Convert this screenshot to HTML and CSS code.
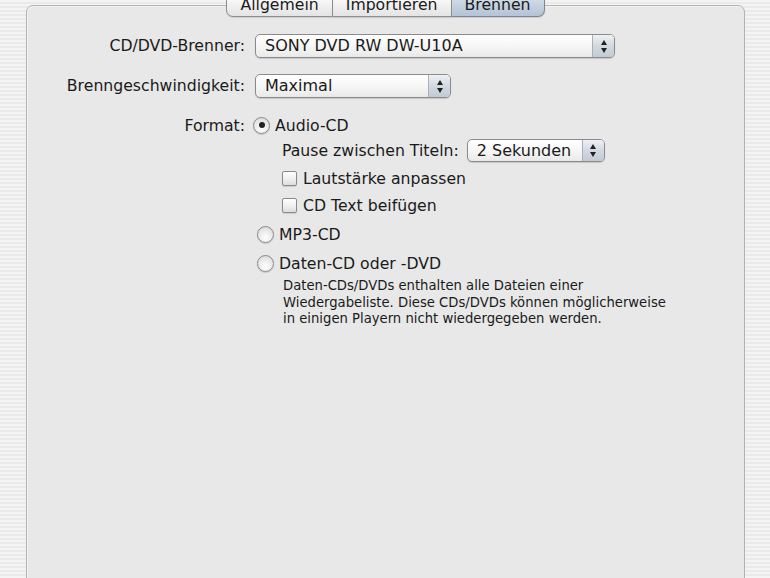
FILE: index.html
```html
<!DOCTYPE html>
<html lang="de">
<head>
  <meta charset="UTF-8">
  <title>Einstellungen – Brennen</title>
  <link rel="stylesheet" href="styles.css">
</head>
<body>
  <div class="window">
    <div class="panel">
      <div class="tabs">
        <div class="tab">Allgemein</div>
        <div class="tab">Importieren</div>
        <div class="tab selected">Brennen</div>
      </div>

      <div class="form">
        <label class="label">CD/DVD-Brenner:</label>
        <div class="popup popup-wide">
          <span class="popup-value">SONY DVD RW DW-U10A</span>
          <span class="popup-arrows"><i class="up"></i><i class="down"></i></span>
        </div>

        <label class="label">Brenngeschwindigkeit:</label>
        <div class="popup popup-speed">
          <span class="popup-value">Maximal</span>
          <span class="popup-arrows"><i class="up"></i><i class="down"></i></span>
        </div>

        <label class="label">Format:</label>
        <div class="options">
          <div class="option">
            <span class="radio checked"></span>
            <span>Audio-CD</span>
          </div>

          <div class="sub pause-row">
            <span>Pause zwischen Titeln:</span>
            <div class="popup popup-pause">
              <span class="popup-value">2 Sekunden</span>
              <span class="popup-arrows"><i class="up"></i><i class="down"></i></span>
            </div>
          </div>
          <div class="sub check-row">
            <span class="checkbox"></span>
            <span>Lautstärke anpassen</span>
          </div>
          <div class="sub check-row">
            <span class="checkbox"></span>
            <span>CD Text beifügen</span>
          </div>

          <div class="option option-alt">
            <span class="radio"></span>
            <span>MP3-CD</span>
          </div>
          <div class="option option-alt">
            <span class="radio"></span>
            <span>Daten-CD oder -DVD</span>
          </div>
          <p class="note">
            Daten-CDs/DVDs enthalten alle Dateien einer<br>
            Wiedergabeliste. Diese CDs/DVDs können möglicherweise<br>
            in einigen Playern nicht wiedergegeben werden.
          </p>
        </div>
      </div>
    </div>
  </div>
</body>
</html>
```

FILE: styles.css
```css
* {
  box-sizing: border-box;
}

html, body {
  height: 100%;
}

body {
  margin: 0;
  overflow: hidden;
  font-family: "DejaVu Sans", sans-serif;
  font-size: 15.7px;
  color: #1a1a1a;
  background: repeating-linear-gradient(to bottom, #f4f4f4 0, #f4f4f4 2px, #eaeaea 2px, #eaeaea 4px);
}

.window {
  height: 100%;
  padding: 5px 25px 0 26px;
}

.panel {
  height: calc(100% + 20px);
  background: #e8e8e8;
  border: 1px solid #b3b3b3;
  border-radius: 7px 7px 0 0;
  box-shadow: inset 1px 1px 0 #f2f2f2;
}

/* segmented tab control sitting on the panel's top edge */
.tabs {
  display: flex;
  justify-content: center;
  margin-top: -13px;
}

.tab {
  height: 24px;
  padding: 2px 13px 0;
  border: 1px solid #8e8e8e;
  border-left: none;
  background: linear-gradient(#ffffff, #f1f1f1 50%, #e4e4e4);
  font-size: 15.7px;
  line-height: 17px;
  box-shadow: 0 1px 1px rgba(0,0,0,0.12);
}

.tab:first-child {
  border-left: 1px solid #8e8e8e;
  border-radius: 0 0 0 7px;
}

.tab:last-child {
  border-radius: 0 0 7px 0;
}

.tab.selected {
  background: linear-gradient(#dfe6ef, #c6d2e0 50%, #b4c3d6);
  border-color: #7d8693;
}

.form {
  display: grid;
  grid-template-columns: 218px auto;
  column-gap: 10px;
  row-gap: 16px;
  justify-content: start;
  margin-top: 17px;
}

.label {
  text-align: right;
  line-height: 24px;
  white-space: nowrap;
}

/* pop-up buttons */
.popup {
  display: flex;
  align-items: stretch;
  height: 24px;
  border: 1px solid #8b8b8b;
  border-radius: 5px;
  background: linear-gradient(#ffffff, #f6f6f6 50%, #e9e9e9);
  box-shadow: 0 1px 1px rgba(0,0,0,0.15);
  overflow: hidden;
}

.popup-wide {
  width: 360px;
}

.popup-speed {
  width: 196px;
}

.popup-pause {
  width: 138px;
  height: 23px;
}

.popup-value {
  flex: 1;
  padding-left: 9px;
  font-size: 16px;
  line-height: 22px;
  white-space: nowrap;
}

.popup-arrows {
  width: 22px;
  display: flex;
  flex-direction: column;
  align-items: center;
  justify-content: center;
  gap: 3px;
  border-left: 1px solid #a9b0b8;
  background: linear-gradient(#eef1f5, #d3d9e1 50%, #c2cad4);
}

.popup-arrows i {
  width: 0;
  height: 0;
  border-left: 3.5px solid transparent;
  border-right: 3.5px solid transparent;
}

.popup-arrows .up {
  border-bottom: 5px solid #222;
}

.popup-arrows .down {
  border-top: 5px solid #222;
}

/* radio groups and checkboxes */
.options {
  display: flex;
  flex-direction: column;
  margin-top: -1px;
}

.option {
  display: flex;
  align-items: center;
  height: 24px;
  gap: 5px;
  margin-left: -2px;
}

.option-alt {
  height: 22px;
  margin-left: 2px;
  margin-top: 7px;
}

.radio {
  width: 17px;
  height: 17px;
  border-radius: 50%;
  border: 1px solid #8a8a8a;
  background: radial-gradient(circle at 50% 70%, #ffffff, #e7e7e7 60%, #cfcfcf);
  box-shadow: 0 1px 1px rgba(0,0,0,0.15);
  display: flex;
  align-items: center;
  justify-content: center;
}

.radio.checked::after {
  content: "";
  width: 6px;
  height: 6px;
  border-radius: 50%;
  background: #222;
}

.sub {
  display: flex;
  align-items: center;
  margin-left: 27px;
}

.pause-row {
  gap: 8px;
  margin-top: 2px;
}

.check-row {
  height: 22px;
  gap: 6px;
  margin-top: 5px;
}

.checkbox {
  width: 15px;
  height: 15px;
  border: 1px solid #8a8a8a;
  border-radius: 2px;
  background: linear-gradient(#ffffff, #ededed 60%, #dcdcdc);
  box-shadow: 0 1px 1px rgba(0,0,0,0.12);
}

.note {
  margin: 4px 0 0 28px;
  font-size: 13.2px;
  line-height: 16.5px;
}
```
